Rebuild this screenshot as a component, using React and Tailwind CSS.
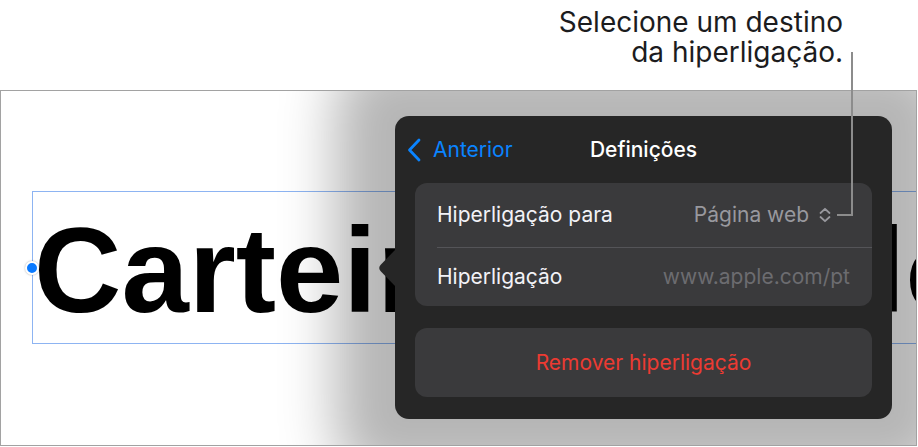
export default function App() {
    return (
        <div className="relative w-[918px] h-[447px] overflow-hidden bg-white font-['Inter',sans-serif]">
            {/* Legenda */}
            <div className="h-[90px] flex justify-end pr-[75px] pt-[7px]">
                <p className="text-right text-[28px] leading-[30px] text-[#1c1c1e]">
                    Selecione um destino
                    <br />
                    da hiperligação.
                </p>
            </div>

            {/* Diapositivo */}
            <div className="relative w-[917px] h-[356px] border border-[#a2a2a2] bg-white overflow-hidden">
                {/* Caixa de texto selecionada */}
                <div className="absolute left-[31px] top-[100px] w-[1000px] h-[153px] border border-[#8db4f2]">
                    <div className="pt-[18px] pl-[1px] whitespace-nowrap leading-none text-[121px] font-bold text-black font-['Liberation_Sans',Arial,sans-serif]">
                        Carteira <span className="ml-[24px]">modelo</span>
                    </div>
                    <span className="absolute left-[-8px] top-[69px] w-[14px] h-[14px] rounded-full bg-[#0a7aff] border-2 border-white shadow-[0_0_2px_rgba(0,0,0,0.35)]" />
                </div>

                {/* Popover */}
                <div className="absolute left-[394px] top-[25px] w-[497px] h-[303px] rounded-[14px] bg-[#262626] shadow-[0_0_55px_60px_rgba(0,0,0,0.29)] flex flex-col">
                    <svg className="absolute left-[-18px] top-[134px]" width="18" height="36" viewBox="0 0 18 36">
                        <path d="M18 0 L3.5 15 Q1 18 3.5 21 L18 36 Z" fill="#262626" />
                    </svg>

                    <div className="h-[67px] grid grid-cols-[1fr_auto_1fr] items-center px-[11px]">
                        <div className="flex items-center gap-[11px] text-[#0a84ff] text-[21px]">
                            <svg width="16" height="24" viewBox="0 0 16 24" fill="none">
                                <path d="M13 2 L3.5 12 L13 22" stroke="#0a84ff" strokeWidth="2.8" strokeLinecap="round" strokeLinejoin="round" />
                            </svg>
                            <span>Anterior</span>
                        </div>
                        <div className="text-white text-[21px] font-medium">Definições</div>
                        <div />
                    </div>

                    <div className="px-[20px]">
                        <div className="rounded-[12px] bg-[#3a3a3c]">
                            <div className="h-[64px] flex items-center justify-between pl-[22px] pr-[40px] text-[21px]">
                                <span className="text-[#f2f2f7]">Hiperligação para</span>
                                <span className="flex items-center gap-[9px] text-[#98989e]">
                                    Página web
                                    <svg width="14" height="16" viewBox="0 0 14 16" fill="none">
                                        <path d="M2.5 6 L7 1.8 L11.5 6 M2.5 10 L7 14.2 L11.5 10" stroke="#98989e" strokeWidth="1.8" strokeLinecap="round" strokeLinejoin="round" />
                                    </svg>
                                </span>
                            </div>
                            <div className="ml-[22px] h-px bg-[#545458]" />
                            <div className="h-[58px] flex items-center justify-between pl-[22px] pr-[22px] text-[21px]">
                                <span className="text-[#f2f2f7]">Hiperligação</span>
                                <span className="text-[#6c6c70]">www.apple.com/pt</span>
                            </div>
                        </div>

                        <div className="mt-[22px] h-[69px] rounded-[12px] bg-[#3a3a3c] flex items-center justify-center text-[21px] text-[#ec3a32]">
                            Remover hiperligação
                        </div>
                    </div>
                </div>
            </div>

            {/* Linha de chamada */}
            <div className="absolute left-[837px] top-[52px] w-[16px] h-[164px] border-r-2 border-b-2 border-[#8c8c8c]" />
        </div>
    );
}
